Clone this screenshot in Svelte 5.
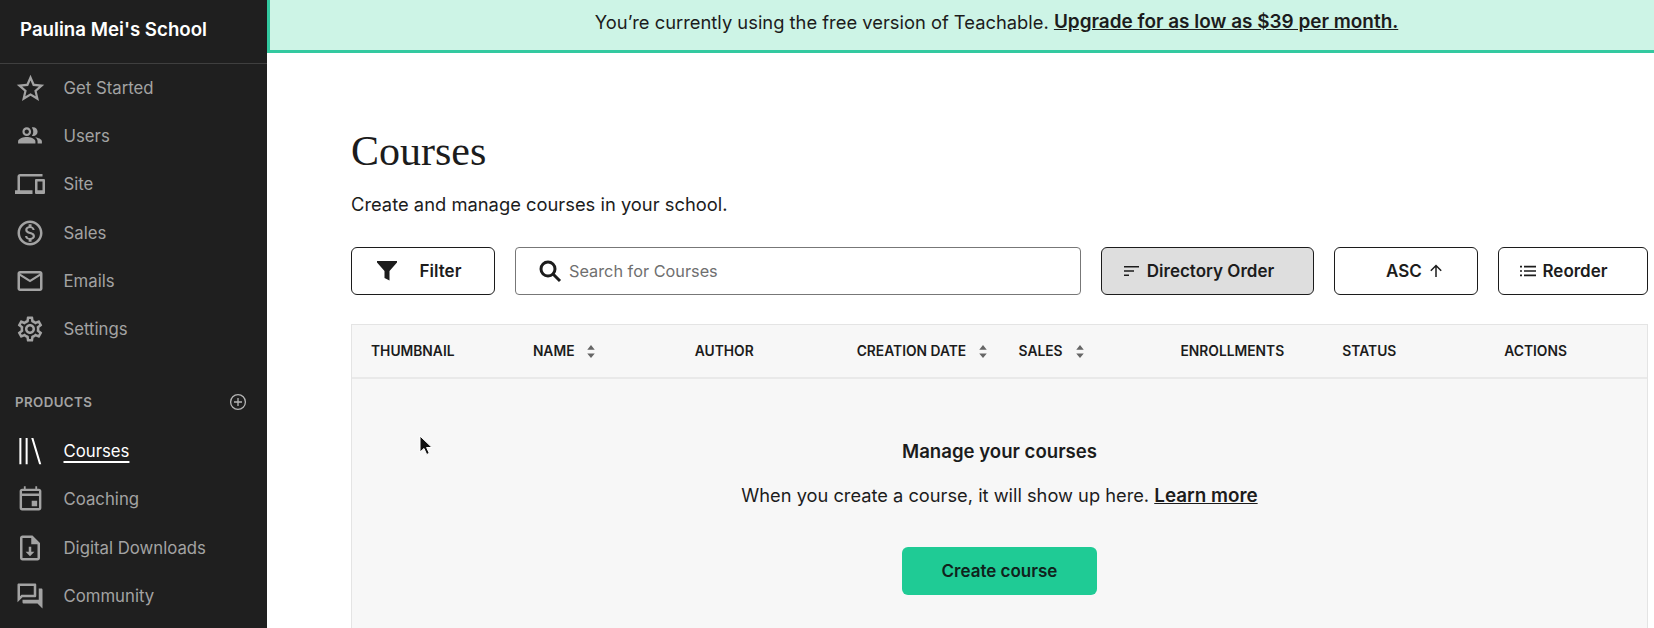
<script lang="ts">
  const mainNav = [
    { label: "Get Started", size: 33, d: "M22 9.24l-7.19-.62L12 2 9.19 8.63 2 9.24l5.46 4.73L5.82 21 12 17.27 18.18 21l-1.63-7.03L22 9.24zM12 15.4l-3.76 2.27 1-4.28-3.32-2.88 4.38-.38L12 6.1l1.71 4.04 4.38.38-3.32 2.88 1 4.28L12 15.4z" },
    { label: "Users", size: 26, d: "M16.67 13.13C18.04 14.06 19 15.32 19 17v2h4v-2c0-2.18-3.57-3.47-6.33-3.87zM15 12c2.21 0 4-1.79 4-4s-1.79-4-4-4c-.47 0-.91.1-1.33.24C14.5 5.27 15 6.58 15 8s-.5 2.73-1.33 3.76c.42.14.86.24 1.33.24zM9 12c2.21 0 4-1.79 4-4s-1.79-4-4-4-4 1.79-4 4 1.79 4 4 4zm0-6c1.1 0 2 .9 2 2s-.9 2-2 2-2-.9-2-2 .9-2 2-2zm0 7c-2.67 0-8 1.34-8 4v2h16v-2c0-2.66-5.33-4-8-4z" },
    { label: "Site", d: "M4 6h18V4H4c-1.1 0-2 .9-2 2v11H0v3h14v-3H4V6zm19 2h-6c-.55 0-1 .45-1 1v10c0 .55.45 1 1 1h6c.55 0 1-.45 1-1V9c0-.55-.45-1-1-1zm-1 9h-4v-7h4v7z" },
    { label: "Sales", d: "M12 2C6.48 2 2 6.48 2 12s4.48 10 10 10 10-4.48 10-10S17.52 2 12 2zm0 18c-4.41 0-8-3.59-8-8s3.59-8 8-8 8 3.59 8 8-3.59 8-8 8zm.31-8.86c-1.77-.45-2.34-.94-2.34-1.67 0-.84.79-1.43 2.1-1.43 1.38 0 1.9.66 1.94 1.64h1.71c-.05-1.34-.87-2.57-2.49-2.97V5H10.9v1.69c-1.51.32-2.72 1.3-2.72 2.81 0 1.79 1.49 2.69 3.66 3.21 1.95.46 2.34 1.15 2.34 1.86 0 .53-.39 1.39-2.1 1.39-1.6 0-2.23-.72-2.32-1.64H8.04c.1 1.7 1.36 2.66 2.86 2.97V19h2.34v-1.67c1.52-.29 2.72-1.16 2.73-2.77-.01-2.2-1.9-2.96-3.66-3.42z" },
    { label: "Emails", d: "M20 4H4c-1.1 0-1.99.9-1.99 2L2 18c0 1.1.9 2 2 2h16c1.1 0 2-.9 2-2V6c0-1.1-.9-2-2-2zm0 14H4V8l8 5 8-5v10zm-8-7L4 6h16l-8 5z" },
    { label: "Settings", d: "M19.43 12.98c.04-.32.07-.64.07-.98 0-.34-.03-.66-.07-.98l2.11-1.65c.19-.15.24-.42.12-.64l-2-3.46c-.09-.16-.26-.25-.44-.25-.06 0-.12.01-.17.03l-2.49 1c-.52-.4-1.08-.73-1.69-.98l-.38-2.65C14.46 2.18 14.25 2 14 2h-4c-.25 0-.46.18-.49.42l-.38 2.65c-.61.25-1.17.59-1.69.98l-2.49-1c-.06-.02-.12-.03-.18-.03-.17 0-.34.09-.43.25l-2 3.46c-.13.22-.07.49.12.64l2.11 1.65c-.04.32-.07.65-.07.98 0 .33.03.66.07.98l-2.11 1.65c-.19.15-.24.42-.12.64l2 3.46c.09.16.26.25.44.25.06 0 .12-.01.17-.03l2.49-1c.52.4 1.08.73 1.69.98l.38 2.65c.03.24.24.42.49.42h4c.25 0 .46-.18.49-.42l.38-2.65c.61-.25 1.17-.59 1.69-.98l2.49 1c.06.02.12.03.18.03.17 0 .34-.09.43-.25l2-3.46c.12-.22.07-.49-.12-.64l-2.11-1.65zm-1.98-1.71c.04.31.05.52.05.73 0 .21-.02.43-.05.73l-.14 1.13.89.7 1.08.84-.7 1.21-1.27-.51-1.04-.42-.9.68c-.43.32-.84.56-1.25.73l-1.06.43-.16 1.13-.2 1.35h-1.4l-.19-1.35-.16-1.13-1.06-.43c-.43-.18-.83-.41-1.23-.71l-.91-.7-1.06.43-1.27.51-.7-1.21 1.08-.84.89-.7-.14-1.13c-.03-.31-.05-.54-.05-.74s.02-.43.05-.73l.14-1.13-.89-.7-1.08-.84.7-1.21 1.27.51 1.04.42.9-.68c.43-.32.84-.56 1.25-.73l1.06-.43.16-1.13.2-1.35h1.39l.19 1.35.16 1.13 1.06.43c.43.18.83.41 1.23.71l.91.7 1.06-.43 1.27-.51.7 1.21-1.07.85-.89.7.14 1.13zM12 8c-2.21 0-4 1.79-4 4s1.79 4 4 4 4-1.79 4-4-1.79-4-4-4zm0 6c-1.1 0-2-.9-2-2s.9-2 2-2 2 .9 2 2-.9 2-2 2z" }
  ];

  const productNav = [
    { label: "Courses", active: true, d: "M3.5 1.5h1.6v21H3.5zM8.5 1.5h1.6v21H8.5zM13 1.5h1.7l6.3 21h-1.7z" },
    { label: "Coaching", size: 29, d: "M17.5 13h-4.5v4.5h4.5V13zM16 1v2H8V1H6.5v2H5c-1.11 0-1.99.9-1.99 2L3 19c0 1.1.89 2 2 2h14c1.1 0 2-.9 2-2V5c0-1.1-.9-2-2-2h-1.5V1H16zm3 18H5V9h14v10zM5 7V5h14v2H5z" },
    { label: "Digital Downloads", d: "M14 2H6c-1.1 0-2 .9-2 2v16c0 1.1.9 2 2 2h12c1.1 0 2-.9 2-2V8l-6-6zm4 18H6V4h7v5h5v11zM11 11v4H8.5l3.5 3.5 3.5-3.5H13v-4h-2z" },
    { label: "Community", d: "M15 4v7H5.17L4 12.17V4h11m1-2H3c-.55 0-1 .45-1 1v14l4-4h10c.55 0 1-.45 1-1V3c0-.55-.45-1-1-1zm5 4h-2v9H6v2c0 .55.45 1 1 1h11l4 4V7c0-.55-.45-1-1-1z" }
  ];

  const columns = [
    { label: "Thumbnail" },
    { label: "Name", sort: true },
    { label: "Author" },
    { label: "Creation Date", sort: true },
    { label: "Sales", sort: true },
    { label: "Enrollments" },
    { label: "Status" },
    { label: "Actions" }
  ];
</script>

<div class="page">
  <aside class="sidebar">
    <div class="school">Paulina Mei's School</div>

    <nav class="nav">
      {#each mainNav as item}
        <a class="nav-item" href="#top">
          <span class="icon"><svg viewBox="0 0 24 24" width={item.size ?? 30} height={item.size ?? 30}><path d={item.d} /></svg></span>
          <span>{item.label}</span>
        </a>
      {/each}
    </nav>

    <div class="section">
      <span>PRODUCTS</span>
      <svg viewBox="0 0 18 18" width="18" height="18" class="add">
        <circle cx="9" cy="9" r="7.4" />
        <path d="M9 5v8M5 9h8" />
      </svg>
    </div>

    <nav class="nav">
      {#each productNav as item}
        <a class="nav-item" class:active={item.active} href="#top">
          <span class="icon"><svg viewBox="0 0 24 24" width={item.size ?? 30} height={item.size ?? 30}><path d={item.d} /></svg></span>
          <span class="text">{item.label}</span>
        </a>
      {/each}
    </nav>
  </aside>

  <main class="main">
    <div class="banner">
      You’re currently using the free version of Teachable.&nbsp;<a href="#top">Upgrade for as low as $39 per month.</a>
    </div>

    <div class="content">
      <h1>Courses</h1>
      <p class="lead">Create and manage courses in your school.</p>

      <div class="toolbar">
        <button class="btn filter">
          <svg viewBox="0 0 20 20" width="20" height="20"><path d="M0 0h20v1.5L12.5 10v9.5L7.5 17v-7L0 1.5z" /></svg>
          Filter
        </button>
        <div class="search">
          <svg viewBox="0 0 24 24" width="24" height="24" fill="none"><circle cx="10" cy="10" r="7" /><path d="M15 15l7 7" /></svg>
          <span>Search for Courses</span>
        </div>
        <button class="btn order">
          <svg viewBox="0 0 16 12" width="16" height="12"><path d="M0 1h15v1.5H0zM0 5.2h10v1.5H0zM0 9.4h5v1.5H0z" /></svg>
          Directory Order
        </button>
        <button class="btn asc">
          ASC
          <svg viewBox="0 0 14 14" width="14" height="14" fill="none"><path class="line" d="M7 13V1.5M1.8 6.7L7 1.5l5.2 5.2" /></svg>
        </button>
        <button class="btn reorder">
          <svg viewBox="0 0 16 12" width="16" height="12"><path d="M0 .8h2v1.6H0zM4 .8h12v1.6H4zM0 5.2h2v1.6H0zM4 5.2h12v1.6H4zM0 9.6h2v1.6H0zM4 9.6h12v1.6H4z" /></svg>
          Reorder
        </button>
      </div>

      <section class="table">
        <div class="thead">
          {#each columns as col}
            <div class="th">
              {col.label}
              {#if col.sort}
                <svg viewBox="0 0 8 16" width="8" height="15" class="sort"><path d="M4 1l4 5H0zM4 15L0 10h8z" /></svg>
              {/if}
            </div>
          {/each}
        </div>
        <div class="empty">
          <h2>Manage your courses</h2>
          <p>When you create a course, it will show up here. <a href="#top">Learn more</a></p>
          <button class="create">Create course</button>
        </div>
      </section>
    </div>
  </main>

  <svg class="cursor" viewBox="0 0 14 22" width="14" height="22">
    <path d="M1 1v16l4-3.5 2.7 6 2.6-1.2-2.7-5.8H13z" />
  </svg>
</div>

<style>
  :global(body) {
    margin: 0;
    background: #fff;
    overflow: hidden;
  }
  .page {
    display: flex;
    position: relative;
    height: 628px;
    overflow: hidden;
    font-family: Inter, "Liberation Sans", sans-serif;
    color: #1c1c1c;
  }
  .sidebar {
    width: 267px;
    flex-shrink: 0;
    background: #1f1f1f;
    color: #a3a3a3;
  }
  .school {
    height: 64px;
    box-sizing: border-box;
    padding: 18px 0 0 20px;
    border-bottom: 1px solid #3f3f3f;
    color: #fff;
    font-size: 18.7px;
    line-height: 24px;
    font-weight: 600;
  }
  .nav {
    display: flex;
    flex-direction: column;
  }
  .nav-item {
    display: flex;
    align-items: center;
    gap: 18.5px;
    height: 48.2px;
    padding-left: 15px;
    color: #a3a3a3;
    text-decoration: none;
    font-size: 16.75px;
  }
  .icon {
    display: flex;
    justify-content: center;
    width: 30px;
    flex-shrink: 0;
  }
  .nav-item svg {
    flex-shrink: 0;
    fill: currentColor;
  }
  .nav-item.active {
    color: #fff;
  }
  .nav-item.active .text {
    text-decoration: underline;
    text-decoration-thickness: 1.5px;
    text-underline-offset: 4px;
  }
  .section {
    display: flex;
    justify-content: space-between;
    align-items: center;
    margin-top: 24px;
    height: 49px;
    margin-bottom: 1px;
    padding: 0 20px 0 15px;
    font-size: 13.3px;
    font-weight: 600;
    letter-spacing: 0.4px;
  }
  .add {
    fill: none;
    stroke: #b5b5b5;
    stroke-width: 1.3;
  }
  .main {
    flex: 1;
    min-width: 0;
  }
  .banner {
    display: flex;
    justify-content: center;
    height: 53px;
    box-sizing: border-box;
    padding-top: 10px;
    padding-left: 69px;
    background: #cdf4e6;
    border-left: 3px solid #33c9a0;
    border-bottom: 3px solid #33c9a0;
    font-size: 18.35px;
    line-height: 24px;
    white-space: pre;
  }
  .banner a {
    color: inherit;
    font-size: 18.95px;
    font-weight: 600;
  }
  .content {
    padding: 74px 6px 0 84px;
  }
  h1 {
    margin: 0;
    font-family: "Liberation Serif", serif;
    font-weight: 400;
    font-size: 42px;
    line-height: 48px;
  }
  .lead {
    margin: 17px 0 0;
    font-size: 18.35px;
    line-height: 24px;
  }
  .toolbar {
    display: flex;
    gap: 20px;
    margin-top: 31px;
    height: 48px;
  }
  .btn {
    display: flex;
    align-items: center;
    justify-content: center;
    box-sizing: border-box;
    border: 1px solid #1c1c1c;
    border-radius: 6px;
    background: #fff;
    color: #1c1c1c;
    font: 600 17px Inter, "Liberation Sans", sans-serif;
  }
  .btn svg {
    fill: #1c1c1c;
  }
  .filter {
    width: 144px;
    gap: 23px;
    padding-right: 14px;
  }
  .search {
    flex: 1;
    display: flex;
    align-items: center;
    gap: 7px;
    box-sizing: border-box;
    padding-left: 22px;
    border: 1px solid #777;
    border-radius: 4px;
    color: #6f6f6f;
    font-size: 16.3px;
  }
  .search svg {
    stroke: #1c1c1c;
    stroke-width: 3;
  }
  .order {
    width: 213px;
    gap: 7px;
    padding-right: 23px;
    background: #dedede;
  }
  .asc {
    width: 144px;
    gap: 7px;
    padding-left: 23px;
  }
  .btn .line {
    fill: none;
    stroke: #1c1c1c;
    stroke-width: 1.5;
  }
  .reorder {
    width: 150px;
    gap: 6px;
    padding-right: 24px;
  }
  .table {
    margin-top: 29px;
    background: #f7f7f7;
    border: 1px solid #e4e4e4;
    border-bottom: 0;
  }
  .thead {
    display: grid;
    grid-template-columns: repeat(8, 161.9px);
    align-items: center;
    height: 52px;
    padding-left: 19px;
    border-bottom: 2px solid #e9e9e9;
  }
  .th {
    display: flex;
    align-items: center;
    gap: 13px;
    font-size: 13.8px;
    font-weight: 600;
    text-transform: uppercase;
    white-space: nowrap;
  }
  .sort {
    fill: #666;
  }
  .empty {
    display: flex;
    flex-direction: column;
    align-items: center;
    padding: 60px 0 60px;
  }
  h2 {
    margin: 0;
    font-size: 18.6px;
    line-height: 24px;
    font-weight: 600;
  }
  .empty p {
    margin: 20px 0 0;
    font-size: 18.25px;
    line-height: 24px;
  }
  .empty a {
    color: inherit;
    font-size: 18.85px;
    font-weight: 600;
  }
  .create {
    width: 195px;
    height: 48px;
    margin-top: 39px;
    border: 0;
    border-radius: 6px;
    background: #1fcb95;
    color: #10231c;
    font: 600 17px Inter, "Liberation Sans", sans-serif;
  }
  .cursor {
    position: absolute;
    left: 419px;
    top: 435px;
    fill: #111;
    stroke: #fff;
    stroke-width: 1;
  }
</style>
